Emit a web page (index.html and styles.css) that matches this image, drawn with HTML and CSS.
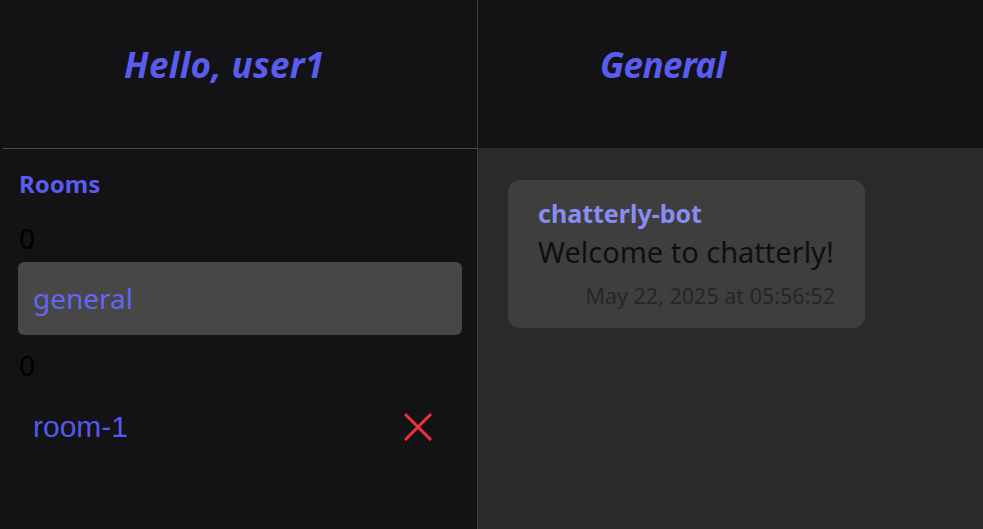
FILE: index.html
```html
<!DOCTYPE html>
<html>
<head>
<meta charset="utf-8">
<link rel="stylesheet" href="styles.css">
</head>
<body>
<div class="app">
  <aside class="sidebar">
    <header class="side-head"><h1 class="title">Hello, user1</h1></header>
    <div class="rooms">
      <h2 class="rooms-title">Rooms</h2>
      <div class="count">0</div>
      <div class="room active"><span class="room-name">general</span></div>
      <div class="count count-next">0</div>
      <div class="room room-other"><button class="room-btn">room-1</button>
        <svg class="del" width="30" height="28" viewBox="0 0 30 28"><path d="M2 1 L28 27 M28 1 L2 27" stroke="#e8323c" stroke-width="3"/></svg>
      </div>
    </div>
  </aside>
  <main class="chat">
    <header class="chat-head"><h1 class="title title-chat">General</h1></header>
    <section class="messages">
      <div class="bubble">
        <div class="author">chatterly-bot</div>
        <div class="text">Welcome to chatterly!</div>
        <div class="time">May 22, 2025 at 05:56:52</div>
      </div>
    </section>
  </main>
</div>
</body>
</html>
```
FILE: styles.css
```css
* { box-sizing: border-box; }
html, body { margin: 0; height: 100%; }
body { background: #131214; font-family: "Noto Sans", "Open Sans", sans-serif; overflow: hidden; }
.app { display: flex; height: 529px; }
.sidebar { width: 478px; border-right: 1px solid #3f3f3f; display: flex; flex-direction: column; }
.side-head { height: 149px; border-bottom: 1px solid #4a4a4a; margin-left: 3px; display: flex; align-items: center; padding-left: 121px; }
.title { margin: 0; font-size: 35px; font-style: italic; font-weight: 700; color: #5a5cf0; letter-spacing: 0.4px; padding-bottom: 18px; line-height: 44px; }
.title-chat { letter-spacing: -0.6px; }
.rooms { padding: 19px 15px 0 18px; }
.rooms-title { margin: 0 0 0 1px; font-size: 24px; font-weight: 700; color: #5a5cf0; line-height: 32px; }
.count { margin: 23px 0 0 1px; font-size: 28px; color: #000; line-height: 30px; }
.count-next { margin-top: 15px; }
.room { height: 73px; margin-top: 9px; border-radius: 6px; display: flex; align-items: center; justify-content: space-between; padding: 0 29px 0 15px; }
.room-other { margin-top: 10px; }
.room.active { background: #474747; }
.room-name { font-size: 28px; color: #6466f2; padding-bottom: 2px; }
.room-btn { background: none; border: 0; padding: 0; font-family: "Liberation Sans", Arial, sans-serif; font-size: 30px; color: #5558e8; }
.del { display: block; }
.chat { flex: 1; display: flex; flex-direction: column; }
.chat-head { height: 149px; border-bottom: 1px solid #2a2a2a; display: flex; align-items: center; padding-left: 122px; }
.messages { flex: 1; background: #2a2a2a; padding: 31px 30px; }
.bubble { width: 357px; height: 148px; background: #3e3e3e; border-radius: 12px; padding: 17px 30px 0 30px; }
.author { font-size: 25px; font-weight: 700; color: #898cf2; line-height: 32px; }
.text { font-size: 29px; color: #0f0f0f; line-height: 40px; margin-top: 3px; }
.time { font-size: 21.5px; color: #262626; text-align: right; line-height: 28px; margin-top: 10px; }
```
